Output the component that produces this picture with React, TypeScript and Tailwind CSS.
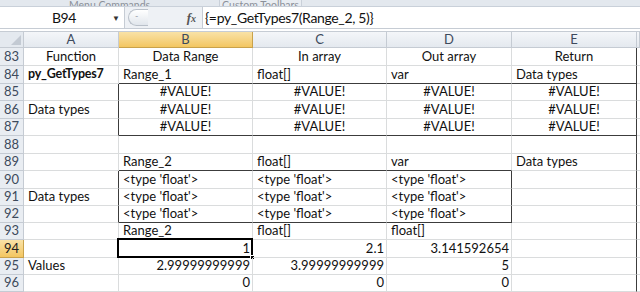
import React from 'react'

type Cell = { v: string; align?: 'l' | 'c' | 'r'; bold?: boolean }

// A..E columns (plus a sliver of F)
const colW = ['w-[95px]', 'w-[134px]', 'w-[134px]', 'w-[125px]', 'w-[125px]', 'w-[3px]']
const heights = ['h-[18px]', 'h-[18px]', 'h-[17px]', 'h-[18px]', 'h-[17px]', 'h-[18px]', 'h-[17px]', 'h-[18px]', 'h-[17px]', 'h-[17px]', 'h-[17px]', 'h-[18px]', 'h-[17px]', 'h-[17px]']

const c = (v: string, align: 'l' | 'c' | 'r' = 'l', bold = false): Cell => ({ v, align, bold })
const E: Cell = { v: '' }
const val = c('#VALUE!', 'c')
const tf = c("<type 'float'>")

const rows: { n: number; cells: Cell[] }[] = [
  { n: 83, cells: [c('Function', 'c'), c('Data Range', 'c'), c('In array', 'c'), c('Out array', 'c'), c('Return', 'c')] },
  { n: 84, cells: [c('py_GetTypes7', 'l', true), c('Range_1'), c('float[]'), c('var'), c('Data types')] },
  { n: 85, cells: [E, val, val, val, val] },
  { n: 86, cells: [c('Data types'), val, val, val, val] },
  { n: 87, cells: [E, val, val, val, val] },
  { n: 88, cells: [E, E, E, E, E] },
  { n: 89, cells: [E, c('Range_2'), c('float[]'), c('var'), c('Data types')] },
  { n: 90, cells: [E, tf, tf, tf, E] },
  { n: 91, cells: [c('Data types'), tf, tf, tf, E] },
  { n: 92, cells: [E, tf, tf, tf, E] },
  { n: 93, cells: [E, c('Range_2'), c('float[]'), c('float[]'), E] },
  { n: 94, cells: [E, c('1', 'r'), c('2.1', 'r'), c('3.141592654', 'r'), E] },
  { n: 95, cells: [c('Values'), c('2.99999999999', 'r'), c('3.99999999999', 'r'), c('5', 'r'), E] },
  { n: 96, cells: [E, c('0', 'r'), c('0', 'r'), c('0', 'r'), E] },
]

// dark right edge for column index ci on row n
function darkRight(n: number, ci: number) {
  if (ci === 4) return true
  if (n >= 85 && n <= 87 && ci === 0) return true
  if (n >= 90 && n <= 92 && (ci === 0 || ci === 3)) return true
  return false
}

function darkBottom(n: number, ci: number) {
  if ((n === 84 || n === 87) && ci >= 1 && ci <= 4) return true
  if ((n === 89 || n === 92) && ci >= 1 && ci <= 3) return true
  return false
}

function ColHeader({ label, w, active }: { label: string; w: string; active?: boolean }) {
  return (
    <div
      className={`${w} shrink-0 h-full flex items-center justify-center border-r border-b ${
        active ? 'bg-gradient-to-b from-[#f9e2a6] to-[#f3c660] border-r-[#c9a24b] border-b-[#c9a24b]' : 'bg-gradient-to-b from-[#f4f6f9] to-[#e4e9ef] border-[#c5cbd3]'
      } text-[#3d4a5c]`}
    >
      {label}
    </div>
  )
}

export default function App() {
  return (
    <div className="w-[640px] h-[292px] overflow-hidden bg-white text-[13px] text-[#111]" style={{ fontFamily: 'Lato, "Liberation Sans", sans-serif' }}>
      {/* ribbon group labels, cut off at the top */}
      <div className="h-[7px] bg-[#e3e8ee] flex items-end overflow-hidden border-b border-[#c9d0d9] text-[10.5px] text-[#8b9099] leading-[10px]">
        <div className="w-[219px] shrink-0 h-full flex justify-center items-end overflow-hidden">
          <span className="translate-y-[4px] whitespace-nowrap">Menu Commands</span>
        </div>
        <div className="w-[83px] shrink-0 h-full flex justify-center items-end overflow-hidden border-x border-[#c9d0d9] bg-[#e9edf2]">
          <span className="translate-y-[4px] whitespace-nowrap">Custom Toolbars</span>
        </div>
      </div>

      {/* formula bar */}
      <div className="h-[22px] flex bg-[#eef1f5] border-b border-[#c6ccd4]">
        <div className="w-[125px] shrink-0 bg-white border-r border-[#c6ccd4] flex items-center relative">
          <span className="w-[124px] pl-[4px] text-center text-[14px] tracking-tight">B94</span>
          <span className="absolute right-[4px] top-[7px] text-[8px] leading-none text-[#333]">▼</span>
        </div>
        <div className="w-[77px] shrink-0 flex items-center">
          <div className="ml-[3px] h-[17px] w-[20px] rounded-l-full border border-r-0 border-[#b9c0c9] bg-gradient-to-b from-[#ffffff] to-[#e1e6ec] flex items-center pl-[6px]">
            <span className="text-[9px] text-[#9aa3ad] leading-none -mt-[4px]">-</span>
          </div>
          <span className="ml-auto mr-[6px] italic font-bold text-[#555] text-[13px]" style={{ fontFamily: '"Liberation Serif", serif' }}>
            f<span className="text-[10px]">x</span>
          </span>
        </div>
        <div className="flex-1 bg-white border-l border-[#c6ccd4] flex items-center pl-[2px] text-[14px] tracking-tight">
          {'{=py_GetTypes7(Range_2, 5)}'}
        </div>
      </div>

      {/* column headers */}
      <div className="mt-[2px] h-[17px] flex border-t border-[#c6ccd4]">
        <div className="w-[24px] shrink-0 h-full bg-[#e4e9ef] border-r border-b border-[#c5cbd3] relative overflow-hidden">
          <div className="absolute right-[2px] bottom-[2px] w-0 h-0 border-l-[10px] border-l-transparent border-b-[10px] border-b-[#c3cad3]" />
        </div>
        <ColHeader label="A" w={colW[0]} />
        <ColHeader label="B" w={colW[1]} active />
        <ColHeader label="C" w={colW[2]} />
        <ColHeader label="D" w={colW[3]} />
        <ColHeader label="E" w={colW[4]} />
        <ColHeader label="" w="flex-1" />
      </div>

      {/* rows */}
      {rows.map((r, ri) => (
        <div key={r.n} className={`${heights[ri]} flex`}>
          <div
            className={`w-[24px] shrink-0 flex items-center justify-center border-r border-b ${
              r.n === 94 ? 'bg-gradient-to-b from-[#f9e2a6] to-[#f3c660] border-[#c9a24b] text-[#222]' : 'bg-[#e9edf2] border-[#c5cbd3] text-[#3d4a5c]'
            }`}
          >
            {r.n}
          </div>
          {[...r.cells, E].map((cell, ci) => (
            <div
              key={ci}
              className={`${colW[ci]} ${ci === 5 ? 'flex-1' : 'shrink-0'} h-full flex items-center border-r border-b whitespace-nowrap relative ${
                darkRight(r.n, ci) ? 'border-r-[#3c3c3c]' : 'border-r-[#dadcdd]'
              } ${darkBottom(r.n, ci) ? 'border-b-[#3c3c3c]' : 'border-b-[#dadcdd]'} ${
                cell.align === 'c' ? 'justify-center' : cell.align === 'r' ? 'justify-end pr-[2px]' : 'justify-start pl-[4px]'
              } ${cell.bold ? 'font-bold text-[12.5px] tracking-[-0.2px]' : ''}`}
            >
              {cell.v}
              {r.n === 94 && ci === 1 && (
                <div className="absolute -left-[2px] -top-[2px] -right-[1px] -bottom-[1px] border-2 border-black pointer-events-none">
                  <div className="absolute -right-[4px] -bottom-[4px] w-[5px] h-[5px] bg-black border border-white" />
                </div>
              )}
            </div>
          ))}
        </div>
      ))}
    </div>
  )
}
